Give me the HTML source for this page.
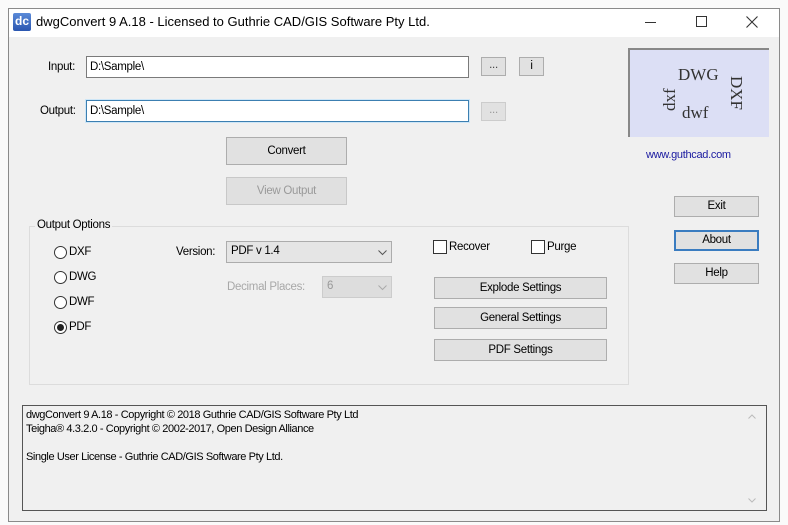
<!DOCTYPE html>
<html><head><style>
*{box-sizing:border-box;margin:0;padding:0}
body{width:788px;height:525px;background:#fafafa;position:relative;overflow:hidden;font-family:"Liberation Sans",sans-serif;font-size:12px;color:#000}
.a{position:absolute}
.win{left:8px;top:8px;width:772px;height:514px;background:#f0f0f0;border:1px solid #8a8a8a}
.title{left:9px;top:9px;width:770px;height:28px;background:#fff}
.in{background:#fff;border:1px solid #7a7a7a;font-size:11.5px;padding:2px 3px;line-height:16px;letter-spacing:-0.3px}
.btn{background:#e1e1e1;border:1px solid #adadad;text-align:center;font-size:11.5px;letter-spacing:-0.3px}
.lbl{font-size:11.5px;letter-spacing:-0.3px}
.rad{width:13px;height:13px;border:1px solid #333;border-radius:50%;background:#fff}
.chk{width:14px;height:14px;border:1px solid #333;background:#fff}
.sel{background:#e5e5e5;border:1px solid #acacac;font-size:11.5px;padding:3px 4px;letter-spacing:-0.3px}
</style></head><body>
<div class="a win"></div>
<div class="a title"></div>
<div class="a" style="left:13px;top:13px;width:18px;height:18px;background:linear-gradient(#5a8ad8,#2a56b0);border-radius:2px;color:#fff;font-size:12px;line-height:17px;text-align:center;font-weight:bold">dc</div>
<div class="a" style="left:36px;top:14px;font-size:13px">dwgConvert 9 A.18 - Licensed to Guthrie CAD/GIS Software Pty Ltd.</div>
<div class="a" style="left:645px;top:22px;width:11px;height:1px;background:#333"></div>
<div class="a" style="left:696px;top:16px;width:11px;height:11px;border:1px solid #333"></div>
<svg class="a" style="left:746px;top:16px" width="12" height="12"><path d="M0.5 0.5L11.5 11.5M11.5 0.5L0.5 11.5" stroke="#333" stroke-width="1.1"/></svg>

<div class="a lbl" style="left:48px;top:61px">Input:</div>
<div class="a in" style="left:86px;top:56px;width:383px;height:22px">D:\Sample\</div>
<div class="a btn" style="left:481px;top:57px;width:25px;height:19px;line-height:14px;color:#444">...</div>
<div class="a btn" style="left:519px;top:57px;width:25px;height:19px;line-height:16px">i</div>

<div class="a lbl" style="left:40px;top:105px">Output:</div>
<div class="a in" style="left:86px;top:100px;width:383px;height:22px;border-color:#3c7fb1;box-shadow:0 0 0 1px #cde6f7">D:\Sample\</div>
<div class="a btn" style="left:481px;top:102px;width:25px;height:19px;line-height:14px;color:#999;border-color:#ccc">...</div>

<div class="a btn" style="left:226px;top:137px;width:121px;height:28px;line-height:26px">Convert</div>
<div class="a btn" style="left:226px;top:177px;width:121px;height:28px;line-height:26px;color:#9a9a9a;border-color:#c8c8c8;background:#e0e0e0">View Output</div>

<div class="a" style="left:628px;top:48px;width:141px;height:89px;background:#dcdff5;border-top:2px solid #888;border-left:2px solid #888;font-family:'Liberation Serif',serif;color:#333">
 <div class="a" style="left:48px;top:15px;font-size:17px">DWG</div>
 <div class="a" style="left:52px;top:53px;font-size:17px">dwf</div>
 <div class="a" style="font-size:17px;transform:rotate(90deg);transform-origin:0 0;left:116px;top:26px">DXF</div>
 <div class="a" style="font-size:17px;transform:rotate(-90deg);transform-origin:0 0;left:30px;top:61px">dxf</div>
</div>
<div class="a" style="left:646px;top:149px;font-size:11px;color:#1a1aa0;letter-spacing:-0.3px">www.guthcad.com</div>

<div class="a btn" style="left:674px;top:196px;width:85px;height:21px;line-height:19px">Exit</div>
<div class="a btn" style="left:674px;top:230px;width:85px;height:21px;line-height:17px;border:2px solid #3a7cc0">About</div>
<div class="a btn" style="left:674px;top:263px;width:85px;height:21px;line-height:19px">Help</div>

<div class="a" style="left:29px;top:226px;width:600px;height:159px;border:1px solid #dcdcdc"></div>
<div class="a lbl" style="left:35px;top:219px;background:#f0f0f0;padding:0 2px">Output Options</div>

<div class="a rad" style="left:54px;top:246px"></div><div class="a lbl" style="left:69px;top:246px">DXF</div>
<div class="a rad" style="left:54px;top:271px"></div><div class="a lbl" style="left:69px;top:271px">DWG</div>
<div class="a rad" style="left:54px;top:296px"></div><div class="a lbl" style="left:69px;top:296px">DWF</div>
<div class="a rad" style="left:54px;top:321px"><div class="a" style="left:2px;top:2px;width:7px;height:7px;border-radius:50%;background:#222"></div></div><div class="a lbl" style="left:69px;top:321px">PDF</div>

<div class="a lbl" style="left:176px;top:246px">Version:</div>
<div class="a sel" style="left:226px;top:241px;width:166px;height:22px">PDF v 1.4</div>
<svg class="a" style="left:378px;top:250px" width="9" height="6"><path d="M0.5 0.5L4.5 4.5L8.5 0.5" stroke="#555" fill="none"/></svg>
<div class="a lbl" style="left:227px;top:281px;color:#a8a8a8">Decimal Places:</div>
<div class="a sel" style="left:322px;top:276px;width:70px;height:22px;color:#999;border-color:#ccc;background:#ddd">6</div>
<svg class="a" style="left:378px;top:285px" width="9" height="6"><path d="M0.5 0.5L4.5 4.5L8.5 0.5" stroke="#aaa" fill="none"/></svg>

<div class="a chk" style="left:433px;top:240px"></div><div class="a lbl" style="left:449px;top:241px">Recover</div>
<div class="a chk" style="left:531px;top:240px"></div><div class="a lbl" style="left:547px;top:241px">Purge</div>

<div class="a btn" style="left:434px;top:277px;width:173px;height:22px;line-height:20px">Explode Settings</div>
<div class="a btn" style="left:434px;top:307px;width:173px;height:22px;line-height:20px">General Settings</div>
<div class="a btn" style="left:434px;top:339px;width:173px;height:22px;line-height:20px">PDF Settings</div>

<div class="a" style="left:22px;top:405px;width:745px;height:106px;border:1px solid #555;background:#f0f0f0;font-size:11px;line-height:14px;padding:2px 3px;letter-spacing:-0.4px">
dwgConvert 9 A.18 - Copyright © 2018 Guthrie CAD/GIS Software Pty Ltd<br>Teigha® 4.3.2.0 - Copyright © 2002-2017, Open Design Alliance<br><br>Single User License - Guthrie CAD/GIS Software Pty Ltd.
</div>
<svg class="a" style="left:748px;top:414px" width="8" height="5"><path d="M0.5 4.5L4 1L7.5 4.5" stroke="#bbb" fill="none"/></svg>
<svg class="a" style="left:748px;top:498px" width="8" height="5"><path d="M0.5 0.5L4 4L7.5 0.5" stroke="#bbb" fill="none"/></svg>
</body></html>
